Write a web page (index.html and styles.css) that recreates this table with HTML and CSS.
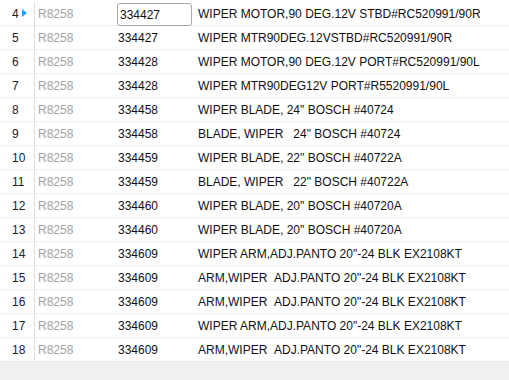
FILE: index.html
```html
<!DOCTYPE html>
<html>
<head>
<meta charset="utf-8">
<link rel="stylesheet" href="styles.css">
</head>
<body>
<div class="grid">
  <div class="row current"><div class="c num">4<span class="tri"></span></div><div class="c ref">R8258</div><div class="c part"><span class="edit">334427</span></div><div class="c desc">WIPER MOTOR,90 DEG.12V STBD#RC520991/90R</div></div>
  <div class="row"><div class="c num">5</div><div class="c ref">R8258</div><div class="c part">334427</div><div class="c desc">WIPER MTR90DEG.12VSTBD#RC520991/90R</div></div>
  <div class="row"><div class="c num">6</div><div class="c ref">R8258</div><div class="c part">334428</div><div class="c desc">WIPER MOTOR,90 DEG.12V PORT#RC520991/90L</div></div>
  <div class="row"><div class="c num">7</div><div class="c ref">R8258</div><div class="c part">334428</div><div class="c desc">WIPER MTR90DEG12V PORT#R5520991/90L</div></div>
  <div class="row"><div class="c num">8</div><div class="c ref">R8258</div><div class="c part">334458</div><div class="c desc">WIPER BLADE, 24" BOSCH #40724</div></div>
  <div class="row"><div class="c num">9</div><div class="c ref">R8258</div><div class="c part">334458</div><div class="c desc">BLADE, WIPER &nbsp; 24" BOSCH #40724</div></div>
  <div class="row"><div class="c num">10</div><div class="c ref">R8258</div><div class="c part">334459</div><div class="c desc">WIPER BLADE, 22" BOSCH #40722A</div></div>
  <div class="row"><div class="c num">11</div><div class="c ref">R8258</div><div class="c part">334459</div><div class="c desc">BLADE, WIPER &nbsp; 22" BOSCH #40722A</div></div>
  <div class="row"><div class="c num">12</div><div class="c ref">R8258</div><div class="c part">334460</div><div class="c desc">WIPER BLADE, 20" BOSCH #40720A</div></div>
  <div class="row"><div class="c num">13</div><div class="c ref">R8258</div><div class="c part">334460</div><div class="c desc">WIPER BLADE, 20" BOSCH #40720A</div></div>
  <div class="row"><div class="c num">14</div><div class="c ref">R8258</div><div class="c part">334609</div><div class="c desc">WIPER ARM,ADJ.PANTO 20"-24 BLK EX2108KT</div></div>
  <div class="row"><div class="c num">15</div><div class="c ref">R8258</div><div class="c part">334609</div><div class="c desc">ARM,WIPER &nbsp;ADJ.PANTO 20"-24 BLK EX2108KT</div></div>
  <div class="row"><div class="c num">16</div><div class="c ref">R8258</div><div class="c part">334609</div><div class="c desc">ARM,WIPER &nbsp;ADJ.PANTO 20"-24 BLK EX2108KT</div></div>
  <div class="row"><div class="c num">17</div><div class="c ref">R8258</div><div class="c part">334609</div><div class="c desc">WIPER ARM,ADJ.PANTO 20"-24 BLK EX2108KT</div></div>
  <div class="row"><div class="c num">18</div><div class="c ref">R8258</div><div class="c part">334609</div><div class="c desc">ARM,WIPER &nbsp;ADJ.PANTO 20"-24 BLK EX2108KT</div></div>
</div>
</body>
</html>
```
FILE: styles.css
```css
html, body {
  margin: 0;
  padding: 0;
  background: #f0f0f0;
  height: 100%;
}
body {
  font-family: "Liberation Sans", Arial, sans-serif;
  font-size: 12px;
  color: #1a1a1a;
}
.grid {
  background: #fff;
  padding-top: 2px;
  width: 509px;
}
.row {
  display: grid;
  grid-template-columns: 35px 80px 82px 1fr;
  height: 23px;
  border-bottom: 1px solid #ececec;
}
.c {
  display: flex;
  align-items: center;
  white-space: pre;
}
.num {
  padding-left: 12px;
  border-right: 1px solid #dedede;
  color: #222;
  position: relative;
}
.tri {
  position: absolute;
  left: 22px;
  top: 7px;
  width: 0;
  height: 0;
  border-top: 4.5px solid transparent;
  border-bottom: 4.5px solid transparent;
  border-left: 5px solid #3399ff;
}
.ref {
  padding-left: 3px;
  color: #a3a3a3;
}
.part {
  padding-left: 3px;
  color: #111;
}
.edit {
  box-sizing: border-box;
  margin-left: -1px;
  margin-top: 1px;
  width: 75px;
  height: 23px;
  border: 1px solid #a8a8a8;
  border-radius: 3px;
  padding-left: 2px;
  display: flex;
  align-items: center;
  background: #fff;
}
.desc {
  padding-left: 1px;
  color: #111;
}
```
